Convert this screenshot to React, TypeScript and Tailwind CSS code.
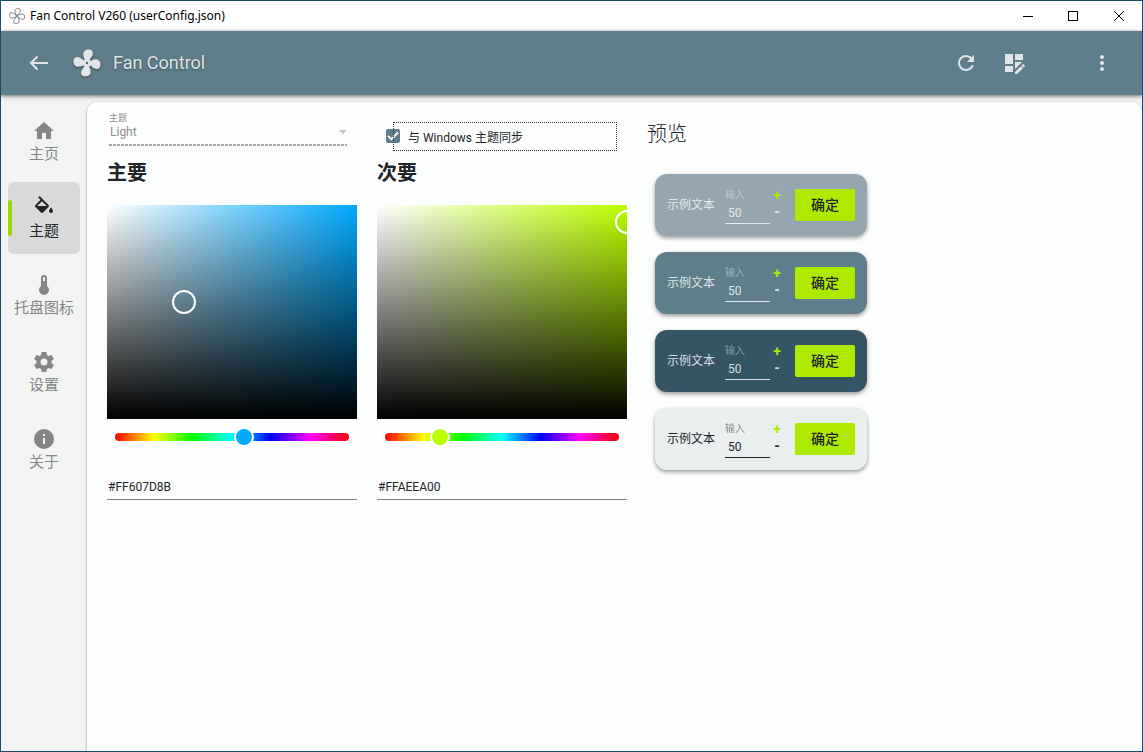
import { useState } from 'react';
import clsx from 'clsx';

const ICONS = {
  refresh:
    'M17.65,6.35C16.2,4.9 14.21,4 12,4A8,8 0 0,0 4,12A8,8 0 0,0 12,20C15.73,20 18.84,17.45 19.73,14H17.65C16.83,16.33 14.61,18 12,18A6,6 0 0,1 6,12A6,6 0 0,1 12,6C13.66,6 15.14,6.69 16.22,7.78L13,11H20V4L17.65,6.35Z',
  dashboardEdit:
    'M21 13.1C20.9 13.1 20.7 13.2 20.6 13.3L19.6 14.3L21.7 16.4L22.7 15.4C22.9 15.2 22.9 14.8 22.7 14.6L21.4 13.3C21.3 13.2 21.2 13.1 21 13.1M19.1 14.9L13 20.9V23H15.1L21.2 16.9L19.1 14.9M13 9V3H21V9H13M13 18.06V11H21V11.1C20.24 11.1 19.57 11.5 19.19 11.89L13 18.06M3 13V3H11V13H3M3 21V15H11V21H3Z',
  more: 'M12,16A2,2 0 0,1 14,18A2,2 0 0,1 12,20A2,2 0 0,1 10,18A2,2 0 0,1 12,16M12,10A2,2 0 0,1 14,12A2,2 0 0,1 12,14A2,2 0 0,1 10,12A2,2 0 0,1 12,10M12,4A2,2 0 0,1 14,6A2,2 0 0,1 12,8A2,2 0 0,1 10,6A2,2 0 0,1 12,4Z',
  home: 'M10,20V14H14V20H19V12H22L12,3L2,12H5V20H10Z',
  fill: 'M19,11.5C19,11.5 17,13.67 17,15A2,2 0 0,0 19,17A2,2 0 0,0 21,15C21,13.67 19,11.5 19,11.5M5.21,10L10,5.21L14.79,10M16.56,8.94L7.62,0L6.21,1.41L8.59,3.79L3.44,8.94C2.85,9.5 2.85,10.47 3.44,11.06L8.94,16.56C9.23,16.85 9.62,17 10,17C10.38,17 10.77,16.85 11.06,16.56L16.56,11.06C17.15,10.47 17.15,9.5 16.56,8.94Z',
  thermometer:
    'M15 13V5A3 3 0 0 0 9 5V13A5 5 0 1 0 15 13M12 4A1 1 0 0 1 13 5V8H11V5A1 1 0 0 1 12 4Z',
  cog: 'M12,15.5A3.5,3.5 0 0,1 8.5,12A3.5,3.5 0 0,1 12,8.5A3.5,3.5 0 0,1 15.5,12A3.5,3.5 0 0,1 12,15.5M19.43,12.97C19.47,12.65 19.5,12.33 19.5,12C19.5,11.67 19.47,11.34 19.43,11L21.54,9.37C21.73,9.22 21.78,8.95 21.66,8.73L19.66,5.27C19.54,5.05 19.27,4.96 19.05,5.05L16.56,6.05C16.04,5.66 15.5,5.32 14.87,5.07L14.5,2.42C14.46,2.18 14.25,2 14,2H10C9.75,2 9.54,2.18 9.5,2.42L9.13,5.07C8.5,5.32 7.96,5.66 7.44,6.05L4.95,5.05C4.73,4.96 4.46,5.05 4.34,5.27L2.34,8.73C2.21,8.95 2.27,9.22 2.46,9.37L4.57,11C4.53,11.34 4.5,11.67 4.5,12C4.5,12.33 4.53,12.65 4.57,12.97L2.46,14.63C2.27,14.78 2.21,15.05 2.34,15.27L4.34,18.73C4.46,18.95 4.73,19.03 4.95,18.95L7.44,17.94C7.96,18.34 8.5,18.68 9.13,18.93L9.5,21.58C9.54,21.82 9.75,22 10,22H14C14.25,22 14.46,21.82 14.5,21.58L14.87,18.93C15.5,18.67 16.04,18.34 16.56,17.94L19.05,18.95C19.27,19.03 19.54,18.95 19.66,18.73L21.66,15.27C21.78,15.05 21.73,14.78 21.54,14.63L19.43,12.97Z',
  info: 'M13,9H11V7H13M13,17H11V11H13M12,2A10,10 0 0,0 2,12A10,10 0 0,0 12,22A10,10 0 0,0 22,12A10,10 0 0,0 12,2Z',
};

type IconName = keyof typeof ICONS;

function Icon({ name, className = 'size-6' }: { name: IconName; className?: string }) {
  return (
    <svg viewBox="0 0 24 24" fill="currentColor" aria-hidden="true" className={className}>
      <path d={ICONS[name]} />
    </svg>
  );
}

const FAN_BLADE =
  'M10.6 10.8C10.4 8.6 8.8 7 8.8 4.4C8.8 2 10.8 .4 13.3 .4C15.9 .4 17.4 2 17.1 4.2C16.8 6.8 14.3 7.6 13.8 10.8Z';

function FanLogo({ outline, className }: { outline?: boolean; className: string }) {
  return (
    <svg viewBox="0 0 24 24" aria-hidden="true" className={className}>
      {[0, 90, 180, 270].map((angle) => (
        <path key={angle} d={FAN_BLADE} transform={`rotate(${angle} 12 12)`} />
      ))}
      {outline ? (
        <circle cx="12" cy="12" r="1" />
      ) : (
        <path fillRule="evenodd" d="M12 8.4A3.6 3.6 0 1 0 12 15.6A3.6 3.6 0 1 0 12 8.4ZM12 11A1 1 0 1 1 12 13A1 1 0 1 1 12 11Z" />
      )}
    </svg>
  );
}

function TitleBar() {
  return (
    <div className="flex h-[30px] shrink-0 items-center bg-white pl-2 text-black">
      <FanLogo outline className="size-4 fill-white stroke-neutral-500 stroke-[1.3]" />
      <span className="ml-[5px] flex-1 font-['Noto_Sans'] text-xs">Fan Control V260 (userConfig.json)</span>
      <button type="button" aria-label="最小化" className="flex h-full w-[46px] items-center justify-center">
        <svg viewBox="0 0 11 11" className="size-[11px] stroke-black" shapeRendering="crispEdges">
          <path d="M1 5.5H11" />
        </svg>
      </button>
      <button type="button" aria-label="最大化" className="flex h-full w-[46px] items-center justify-center">
        <svg viewBox="0 0 11 11" className="size-[11px] fill-none stroke-black" shapeRendering="crispEdges">
          <path d="M.5 .5H9.5V9.5H.5Z" />
        </svg>
      </button>
      <button type="button" aria-label="关闭" className="flex h-full w-[46px] items-center justify-center">
        <svg viewBox="0 0 11 11" className="size-[11px] stroke-black">
          <path d="M0 0L10 10M10 0L0 10" />
        </svg>
      </button>
    </div>
  );
}

function AppBar() {
  return (
    <header className="z-10 flex h-16 shrink-0 items-center bg-[#607d8b] pl-[26px] text-[#dfe5e8] shadow-[0_1px_4px_rgba(0,0,0,0.6)]">
      <button type="button" aria-label="返回">
        <svg viewBox="0 0 24 24" className="size-6 fill-none stroke-current" strokeWidth="2">
          <path d="M21 12H4M10.5 5.5L4 12L10.5 18.5" />
        </svg>
      </button>
      <FanLogo className="ml-[22px] size-7 fill-current drop-shadow-[0_1px_1px_rgba(0,0,0,0.4)]" />
      <h1 className="ml-3 flex-1 text-lg [text-shadow:0_1px_2px_rgba(0,0,0,0.4)]">Fan Control</h1>
      <button type="button" aria-label="刷新">
        <Icon name="refresh" />
      </button>
      <button type="button" aria-label="编辑布局" className="ml-6">
        <Icon name="dashboardEdit" />
      </button>
      <button type="button" aria-label="更多" className="mr-7 ml-16">
        <Icon name="more" />
      </button>
    </header>
  );
}

const NAV_ITEMS: { label: string; icon: IconName }[] = [
  { label: '主页', icon: 'home' },
  { label: '主题', icon: 'fill' },
  { label: '托盘图标', icon: 'thermometer' },
  { label: '设置', icon: 'cog' },
  { label: '关于', icon: 'info' },
];

function SideNav() {
  const [active, setActive] = useState('主题');

  return (
    <nav className="flex w-[86px] shrink-0 flex-col gap-[5px] px-[7px] pt-[10px]">
      {NAV_ITEMS.map(({ label, icon }) => (
        <button
          key={label}
          type="button"
          onClick={() => setActive(label)}
          className={clsx(
            'relative flex h-[72px] flex-col items-center justify-center rounded-md pt-0.5 text-[15px] leading-[22px] whitespace-nowrap',
            active === label ? 'bg-[#d8d9d9] text-[#222428]' : 'text-[#848687]',
          )}
        >
          {active === label && <span className="absolute top-[18px] left-0 h-9 w-1 rounded-xs bg-[#9fd600]" />}
          <Icon name={icon} />
          {label}
        </button>
      ))}
    </nav>
  );
}

interface ColorPickerProps {
  readonly title: string;
  readonly hueColor: string;
  readonly initialHue: number;
  readonly initialHex: string;
  readonly cursor: { x: number; y: number };
}

function ColorPicker({ title, hueColor, initialHue, initialHex, cursor }: ColorPickerProps) {
  const [hue, setHue] = useState(initialHue);
  const [hex, setHex] = useState(initialHex);

  return (
    <section className="w-[250px]">
      <h2 className="text-xl leading-7 font-bold text-[#222428]">{title}</h2>
      <div
        className="relative mt-[18px] h-[214px] overflow-hidden"
        style={{
          background: `linear-gradient(to top, #000, transparent), linear-gradient(to right, #fff, ${hueColor})`,
        }}
      >
        <span
          className="absolute size-6 -translate-1/2 rounded-full border-2 border-white"
          style={{ left: cursor.x, top: cursor.y }}
        />
      </div>
      <div className="mt-2 grid items-center">
        <div className="col-start-1 row-start-1 mx-2 h-2 rounded-full bg-[linear-gradient(to_right,#f00,#ff0,#0f0,#0ff,#00f,#f0f,#f00)]" />
        <input
          type="range"
          aria-label={`${title}色相`}
          min={0}
          max={360}
          value={hue}
          onChange={(e) => setHue(Number(e.target.value))}
          className="col-start-1 row-start-1 h-5 w-full appearance-none bg-transparent [&::-webkit-slider-thumb]:size-5 [&::-webkit-slider-thumb]:appearance-none [&::-webkit-slider-thumb]:rounded-full [&::-webkit-slider-thumb]:border-2 [&::-webkit-slider-thumb]:border-white [&::-webkit-slider-thumb]:bg-current"
          style={{ color: hueColor }}
        />
      </div>
      <input
        type="text"
        aria-label={`${title}颜色`}
        value={hex}
        onChange={(e) => setHex(e.target.value)}
        className="mt-[27px] h-[26px] w-full border-b border-[#7f8181] bg-transparent px-px text-xs text-[#222428] outline-none"
      />
    </section>
  );
}

const PREVIEWS = [
  { id: 'light', card: 'bg-[#95a6b0] text-[#e4e9eb]', line: 'border-[#e4e9eb]' },
  { id: 'mid', card: 'bg-[#607d8b] text-[#dfe5e8]', line: 'border-[#dfe5e8]' },
  { id: 'dark', card: 'bg-[#365564] text-[#d7dde0]', line: 'border-[#d7dde0]' },
  { id: 'paper', card: 'bg-[#e9eeee] text-[#222428]', line: 'border-[#222428]' },
];

function PreviewCard({ id, card, line }: (typeof PREVIEWS)[number]) {
  return (
    <div
      className={clsx(
        'flex h-[62px] w-[212px] items-center rounded-xl px-3 text-xs shadow-[0_2px_4px_rgba(0,0,0,0.4)]',
        card,
      )}
    >
      <span>示例文本</span>
      <div className={clsx('ml-[10px] flex h-[38px] w-[45px] flex-col border-b pt-px', line)}>
        <label htmlFor={`sample-${id}`} className="text-[10px] leading-4 opacity-50">
          输入
        </label>
        <input
          id={`sample-${id}`}
          type="text"
          defaultValue="50"
          className="h-5 w-full bg-transparent pl-[3px] outline-none"
        />
      </div>
      <div className="ml-0.5 flex w-[10px] flex-col items-center pb-0.5 text-sm leading-[17px] font-bold">
        <button type="button" className="text-[#aeea00]">
          +
        </button>
        <button type="button">-</button>
      </div>
      <button
        type="button"
        className="ml-[13px] h-8 w-[60px] rounded-xs bg-[#aeea00] text-sm font-medium text-[#222428]"
      >
        确定
      </button>
    </div>
  );
}

function ThemePage() {
  const [sync, setSync] = useState(true);

  return (
    <main className="mt-[7px] flex min-w-0 flex-1 gap-5 rounded-t-[10px] bg-[#fcfdfd] pl-5 shadow-[0_1px_3px_rgba(0,0,0,0.4)]">
      <div>
        <div className="grid grid-cols-[250px_250px] gap-5 pt-[10px]">
          <div className="relative mr-[10px] ml-0.5 h-[34px] text-[#8b8d8e]">
            <label htmlFor="theme" className="block text-[9px] leading-[12px]">
              主题
            </label>
            <select
              id="theme"
              disabled
              className="block w-full appearance-none bg-transparent pl-px text-xs leading-4 opacity-100"
            >
              <option>Light</option>
            </select>
            <svg viewBox="0 0 8 4" className="absolute right-0 bottom-3 h-1 w-2 fill-[#c3c5c5]">
              <path d="M0 0H8L4 4Z" />
            </svg>
            <span className="absolute inset-x-0 bottom-0 h-0.5 bg-[repeating-linear-gradient(to_right,#a6a8a8_0_3px,transparent_3px_4px)]" />
          </div>
          <label className="relative mt-[10px] mr-[10px] ml-4 flex h-[29px] items-center text-xs text-[#222428]">
            <span className="relative -ml-[7px] flex pb-0.5">
              <input
                type="checkbox"
                checked={sync}
                onChange={(e) => setSync(e.target.checked)}
                className="peer size-[14px] appearance-none rounded-xs border-2 border-[#607d8b] checked:bg-[#607d8b]"
              />
              <svg
                viewBox="0 0 14 14"
                className="invisible absolute top-0 left-0 size-[14px] fill-none stroke-white peer-checked:visible"
                strokeWidth="2"
              >
                <path d="M2 7L5.5 10.2L12 3.5" />
              </svg>
            </span>
            <span className="absolute inset-0 border border-dotted border-[#333]" />
            <span className="ml-2 pt-0.5">与 Windows 主题同步</span>
          </label>
        </div>
        <div className="mt-2 flex gap-5">
          <ColorPicker
            title="主要"
            hueColor="#00a8ff"
            initialHue={199}
            initialHex="#FF607D8B"
            cursor={{ x: 77, y: 97 }}
          />
          <ColorPicker
            title="次要"
            hueColor="#bbff00"
            initialHue={83}
            initialHex="#FFAEEA00"
            cursor={{ x: 250, y: 17 }}
          />
        </div>
      </div>
      <section className="pt-[18px]">
        <h2 className="text-xl leading-7 font-light text-[#222428]">预览</h2>
        <div className="mt-[26px] ml-2 flex flex-col gap-4">
          {PREVIEWS.map((preview) => (
            <PreviewCard key={preview.id} {...preview} />
          ))}
        </div>
      </section>
    </main>
  );
}

export default function App() {
  return (
    <div className="flex h-screen flex-col overflow-hidden border border-[#1b4a6b] bg-[#f2f3f3] font-[Roboto,'Noto_Sans_CJK_SC',sans-serif]">
      <TitleBar />
      <AppBar />
      <div className="flex min-h-0 flex-1">
        <SideNav />
        <ThemePage />
      </div>
    </div>
  );
}
